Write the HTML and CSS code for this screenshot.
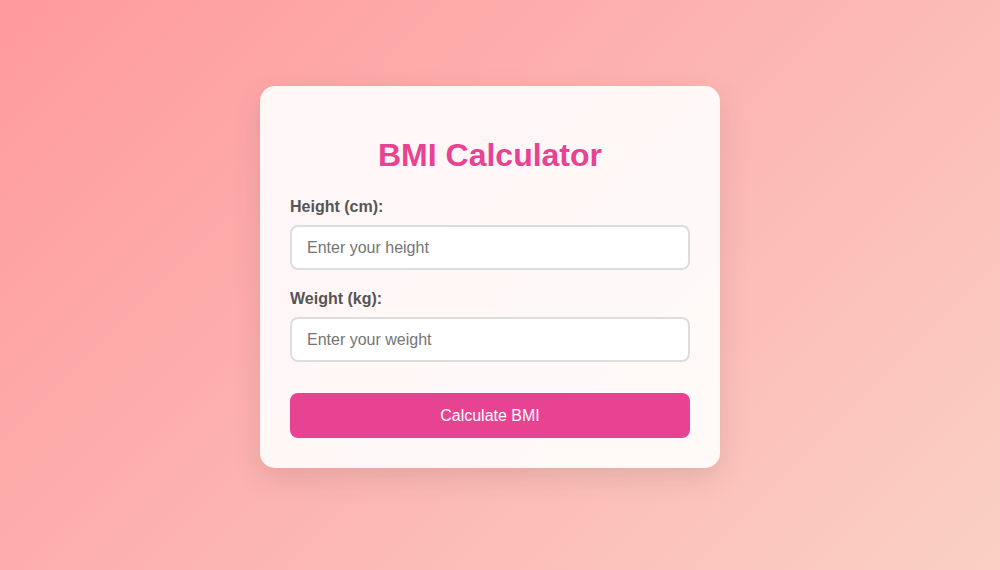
FILE: index.html
```html
<!DOCTYPE html>
<html lang="en">
<head>
<meta charset="UTF-8">
<title>BMI Calculator</title>
<link rel="stylesheet" href="styles.css">
</head>
<body>
  <div class="card">
    <h1 class="title">BMI Calculator</h1>
    <div class="group">
      <label class="label" for="height">Height (cm):</label>
      <input class="input" id="height" type="number" placeholder="Enter your height">
    </div>
    <div class="group">
      <label class="label" for="weight">Weight (kg):</label>
      <input class="input" id="weight" type="number" placeholder="Enter your weight">
    </div>
    <button class="btn" type="button">Calculate BMI</button>
  </div>
</body>
</html>
```
FILE: styles.css
```css
* { box-sizing: border-box; }
html, body { height: 100%; }
body {
  margin: 0;
  padding: 0 20px 16px 0;
  min-height: 100vh;
  display: flex;
  align-items: center;
  justify-content: center;
  font-family: "Liberation Sans", Arial, sans-serif;
  background: linear-gradient(135deg, #ff9a9e 0%, #fad0c4 100%);
}
.card {
  width: 460px;
  padding: 30px;
  background: rgba(255, 255, 255, 0.9);
  border-radius: 15px;
  box-shadow: 0 10px 30px rgba(0, 0, 0, 0.1);
}
.title {
  margin: 21px 0 24px;
  font-size: 32px;
  line-height: 37px;
  font-weight: bold;
  color: #e84393;
  text-align: center;
}
.group { margin-bottom: 20px; }
.label {
  display: block;
  margin-bottom: 9px;
  font-size: 16px;
  line-height: 18px;
  font-weight: bold;
  color: #555;
}
.input {
  display: block;
  width: 100%;
  height: 45px;
  padding: 0 15px;
  border: 2px solid #ddd;
  border-radius: 8px;
  font-family: inherit;
  font-size: 16px;
  color: #333;
  background: #fff;
  outline: none;
}
.input::placeholder { color: #757575; }
.btn {
  display: block;
  width: 100%;
  height: 45px;
  margin-top: 31px;
  border: none;
  border-radius: 8px;
  background: #e84393;
  color: #fff;
  font-family: inherit;
  font-size: 16px;
  cursor: pointer;
}
```
